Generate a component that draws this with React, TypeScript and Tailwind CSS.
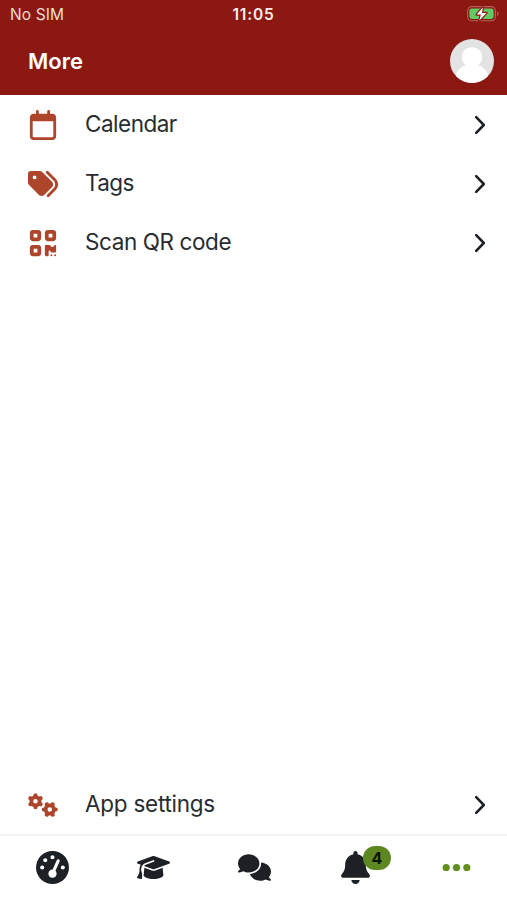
import type { ReactNode } from "react";
import {
  FaBell,
  FaComments,
  FaEllipsis,
  FaGaugeHigh,
  FaGears,
  FaGraduationCap,
  FaQrcode,
  FaRegCalendar,
  FaTags,
} from "react-icons/fa6";

function Battery() {
  return (
    <svg width="34" height="18" viewBox="0 0 34 18" fill="none">
      <rect x="1.6" y="1.6" width="27.8" height="14.2" rx="4.2" stroke="#b5605a" strokeWidth="1.1" />
      <path d="M31.2 6.500v4.400c1-.3 1.400-1.200 1.400-2.200s-.4-1.900-1.400-2.200z" fill="#b5605a" />
      <rect x="3.400" y="3.400" width="24.200" height="10.600" rx="2.400" fill="#60cb65" />
      <path
        d="M16.900 2.300 10.700 9.500h4.200l-1.600 6 7.200-7.600h-4.500z"
        fill="#fff"
        stroke="#8c1911"
        strokeWidth="2.400"
        paintOrder="stroke"
        strokeLinejoin="round"
      />
    </svg>
  );
}

function Avatar() {
  return (
    <svg className="rounded-full" width="44" height="44" viewBox="0 0 44 44">
      <rect width="44" height="44" fill="#e3e3e4" />
      <path
        d="M22 8.300c-5.800 0-10.100 3.900-10.100 9.600 0 3.700 1.600 6.700 4 8.300-4.600 1.300-7.900 4.300-9.600 8.300V44h31.400v-9.500c-1.700-4-5-7-9.600-8.300 2.400-1.600 4-4.600 4-8.300 0-5.700-4.300-9.600-10.100-9.600z"
        fill="#fff"
      />
    </svg>
  );
}

function Row({ icon, label, spacing }: { icon: ReactNode; label: string; spacing: string }) {
  return (
    <button className="flex h-[59.4px] w-full shrink-0 items-center pr-[19px] pl-7 text-left">
      <span className="flex w-[30px] text-[30px] text-[#ad452a]">{icon}</span>
      <span className={`ml-[27px] flex-1 pb-[2px] text-[22.5px] leading-7 text-[#292c2f] ${spacing}`}>{label}</span>
      <svg width="16" height="22" viewBox="0 0 16 22" fill="none">
        <path d="m4.200 3.200 7.600 7.800-7.600 7.800" stroke="#1d2125" strokeWidth="2.600" strokeLinecap="round" strokeLinejoin="round" />
      </svg>
    </button>
  );
}

export default function App() {
  return (
    <div className="flex h-[900px] w-full flex-col overflow-hidden bg-white font-['Inter','Liberation_Sans',sans-serif]">
      <header className="h-[95px] shrink-0 bg-[#8c1911] text-white">
        <div className="grid h-[29px] grid-cols-3 items-center pr-[7px] pl-[10px] text-[15.5px]">
          <span className="tracking-[0.1px] text-[#f1d9d7]">No SIM</span>
          <span className="-ml-[3px] text-center font-semibold tracking-[0.8px] text-[#fbeeed]">11:05</span>
          <span className="flex justify-end pb-px">
            <Battery />
          </span>
        </div>
        <div className="flex h-[65px] items-center justify-between pr-[13px] pl-7">
          <h1 className="text-[22px] font-semibold">More</h1>
          <div className="pb-px">
            <Avatar />
          </div>
        </div>
      </header>
      <main className="flex flex-1 flex-col">
        <Row icon={<FaRegCalendar />} label="Calendar" spacing="tracking-[-0.5px]" />
        <Row icon={<FaTags />} label="Tags" spacing="tracking-[-0.6px]" />
        <Row icon={<FaQrcode />} label="Scan QR code" spacing="tracking-[-0.4px]" />
        <div className="-mb-px mt-auto">
          <Row icon={<FaGears />} label="App settings" spacing="tracking-[-0.25px]" />
        </div>
      </main>
      <nav className="grid h-[66px] shrink-0 grid-cols-5 items-center justify-items-center border-t-2 border-[#f3f3f3] pb-[2px] pl-[2px] text-[33px] text-[#1d2125]">
        <FaGaugeHigh />
        <FaGraduationCap />
        <FaComments />
        <span className="relative">
          <FaBell />
          <span className="absolute -top-[5px] left-[24px] flex h-6 w-7 items-center justify-center rounded-full bg-[#5d8721] text-[16px] font-bold text-[#10150a]">
            4
          </span>
        </span>
        <FaEllipsis className="text-[33px] text-[#638f20]" />
      </nav>
    </div>
  );
}
